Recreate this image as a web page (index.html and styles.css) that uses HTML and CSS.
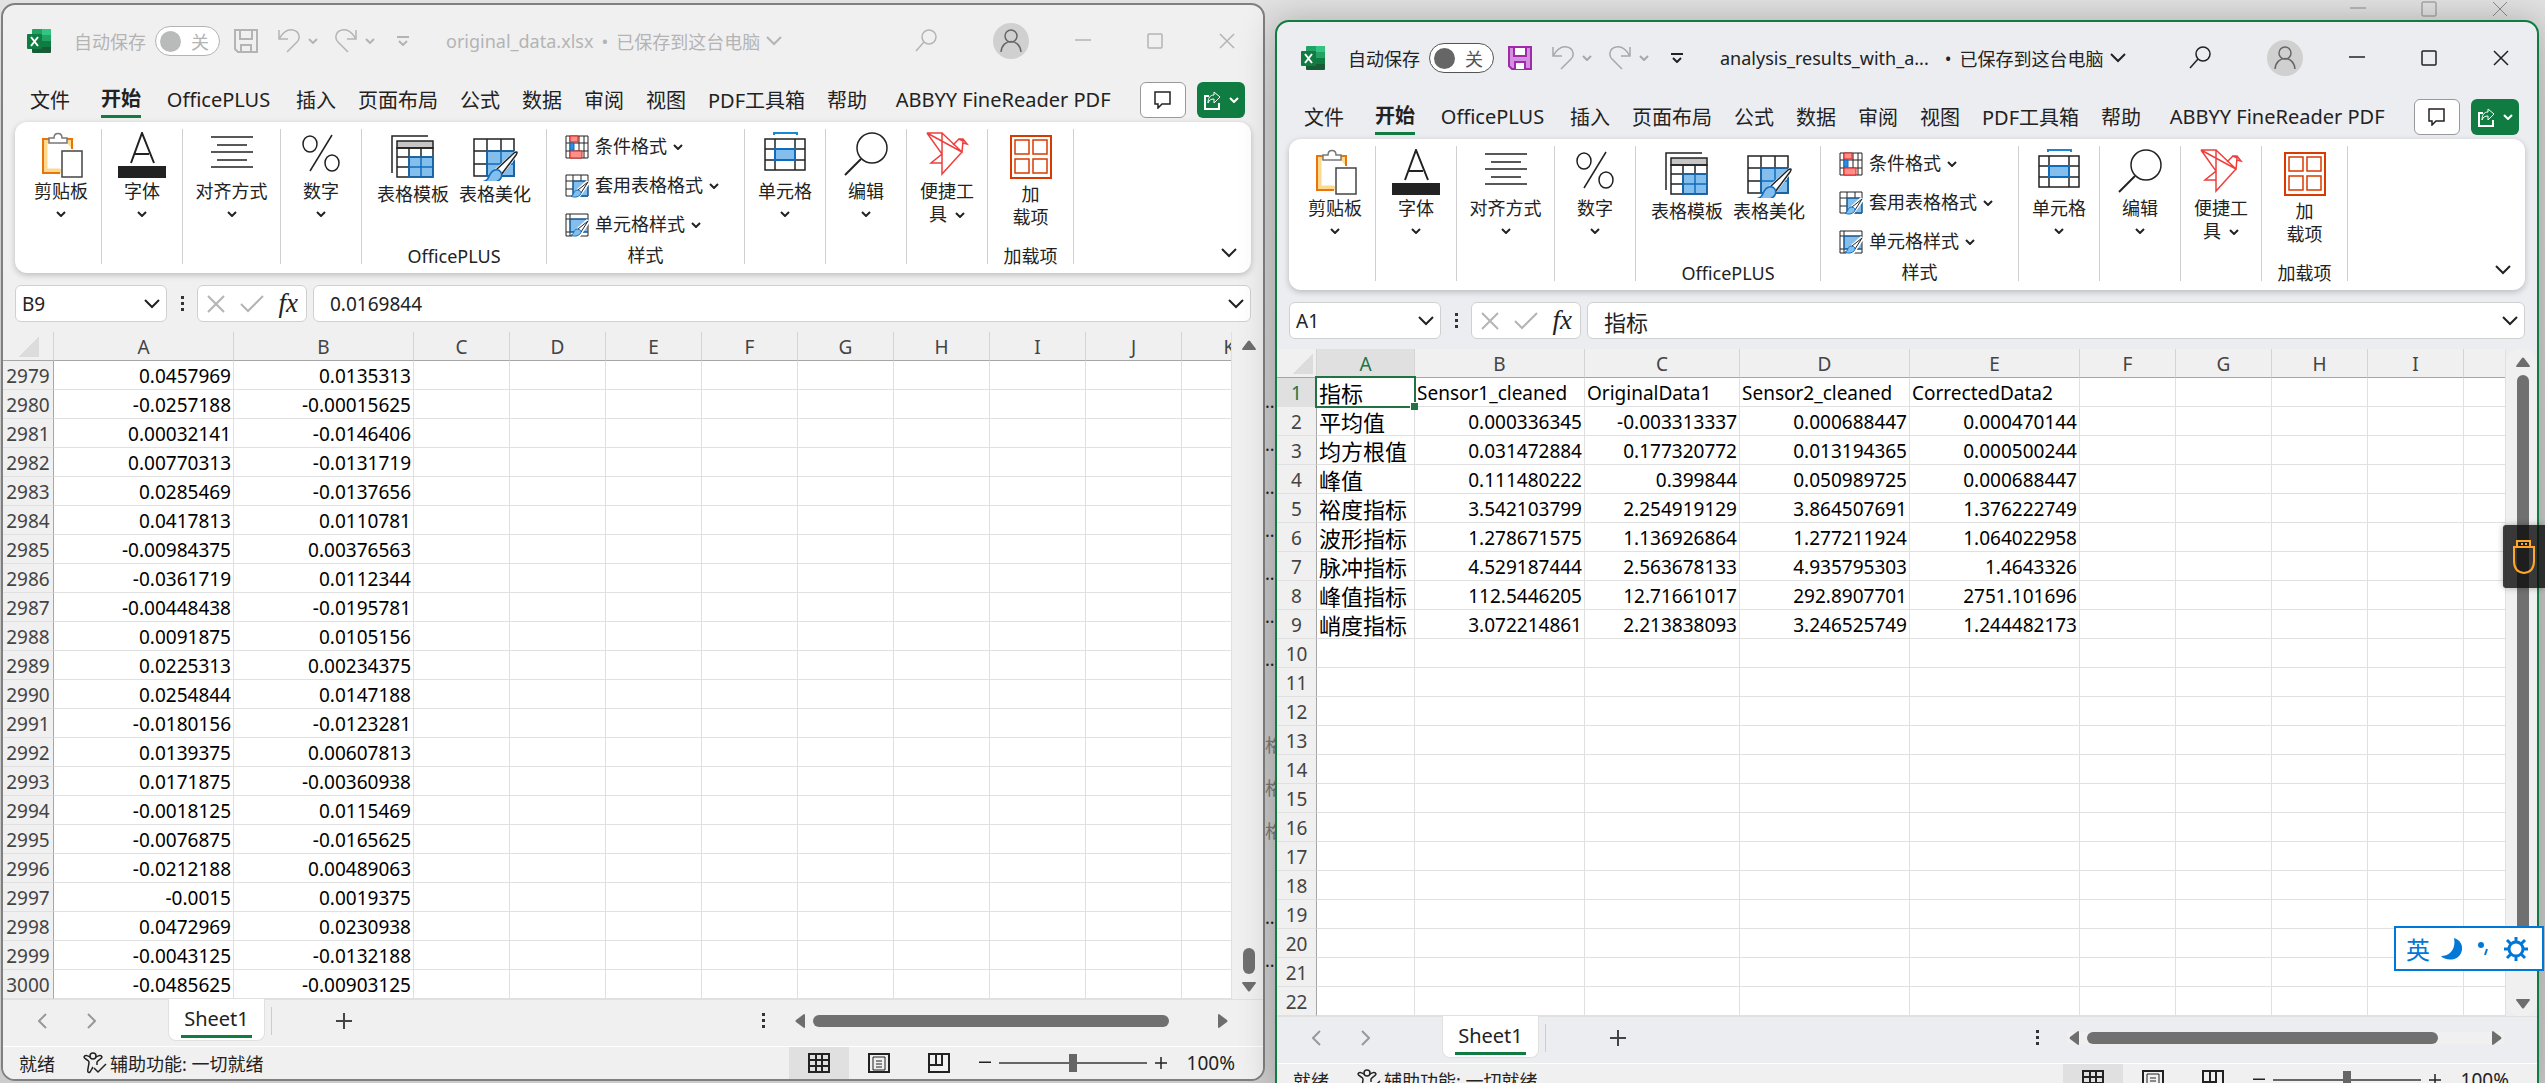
FILE: index.html
```html
<!DOCTYPE html>
<html lang="zh-CN">

<head>
    <meta charset="utf-8">
    <meta name="viewport" content="width=device-width, initial-scale=1.0">
    <title>Excel</title>
    <link rel="stylesheet" href="styles.css">
</head>

<body>

    <!-- icons -->
    <svg class="sprite" aria-hidden="true">
        <symbol id="i-excel" viewBox="0 0 24 24">
            <path d="M6 0h17q1 0 1 1v6H5V1q0-1 1-1z" fill="#21a366" />
            <path d="M15 0h8q1 0 1 1v6h-9z" fill="#33c481" />
            <path d="M5 6h10v6H5z" fill="#107c41" />
            <path d="M15 6h9v6h-9z" fill="#21a366" />
            <path d="M5 12h10v6H5z" fill="#185c37" />
            <path d="M15 12h9v6h-9z" fill="#107c41" />
            <path d="M5 18h19v5q0 1-1 1H6q-1 0-1-1z" fill="#185c37" />
            <rect y="5" width="15" height="15" rx="1" fill="#107c41" />
            <path d="M4 8l7 9M11 8l-7 9" stroke="#fff" stroke-width="2" fill="none" />
        </symbol>
        <symbol id="i-save" viewBox="0 0 24 24">
            <path class="disk" d="M1 1h22v22H4l-3-3z" stroke-width="2" />
            <path class="disk_part" d="M6 1h12v9H6zM7 23v-7h10v7" stroke-width="2" />
        </symbol>
        <symbol id="i-undo" viewBox="0 0 22 24">
            <path d="M1 1v9h9M1 10C5 3 10 0 15 1c6 1 8 8 4 12L9 23" />
        </symbol>
        <symbol id="i-redo" viewBox="0 0 22 24">
            <path d="M21 1v9h-9M21 10C17 3 12 0 7 1 1 2-1 9 3 13l10 10" />
        </symbol>
        <symbol id="i-chev" viewBox="0 0 10 6">
            <path d="M1 1l4 4 4-4" stroke-width="2" />
        </symbol>
        <symbol id="i-bigchev" viewBox="0 0 16 10">
            <path d="M1 1l7 7 7-7" stroke-width="2" />
        </symbol>
        <symbol id="i-custom" viewBox="0 0 12 10">
            <path d="M0 1h12M2 5l4 4 4-4" stroke-width="2" />
        </symbol>
        <symbol id="i-search" viewBox="0 0 22 24">
            <circle cx="14" cy="8" r="7" />
            <path d="M9 13L1 22" />
        </symbol>
        <symbol id="i-user" viewBox="0 0 22 24">
            <circle cx="11" cy="7" r="6" />
            <path d="M1 23c1-14 19-14 20 0" />
        </symbol>
        <symbol id="i-min" viewBox="0 0 16 16"><path d="M0 7h16" /></symbol>
        <symbol id="i-max" viewBox="0 0 16 16"><rect x="1" y="1" width="14" height="14" rx="1" /></symbol>
        <symbol id="i-close" viewBox="0 0 16 16"><path d="M1 1l14 14M15 1L1 15" /></symbol>
        <symbol id="i-comment" viewBox="0 0 18 18">
            <path d="M1 1h15v12H8l-4 4v-4H1z" />
        </symbol>
        <symbol id="i-share" viewBox="0 0 18 20">
            <path d="M5 6H1v13h14v-6" stroke-width="2" />
            <path d="M10 2l6 5-6 6v-4c-3 0-5 1-6 4 0-5 2-8 6-8z" />
        </symbol>

        <symbol id="i-paste" viewBox="-1 0 44 46">
            <path d="M9 7h-6v34h18v-4H7V11h3M31 16V7h-7" fill="#ffdc8c" stroke="none" />
            <path d="M10 7H3v34h17" stroke="#e8740c" stroke-width="2" />
            <path d="M6 9v29h14" stroke="#ffd88f" stroke-width="3" />
            <path d="M26 7h6v10" stroke="#e8740c" stroke-width="2" />
            <path d="M9 11V6h5c0-6 8-6 8 0h5v5z" fill="#fff" stroke="#777" />
            <path d="M22 19h20v26H22z" fill="#fff" stroke="#444" />
        </symbol>
        <symbol id="i-font" viewBox="0 0 48 46">
            <path d="M13 31L24 1l12 30M17 22h14" stroke-width="2" />
            <path d="M0 34h48v12H0z" fill="#222" stroke="none" />
        </symbol>
        <symbol id="i-align" viewBox="0 0 42 46">
            <path d="M0 5h42M6 13h30M0 20h42M6 28h30M0 35h42" />
        </symbol>
        <symbol id="i-percent" viewBox="0 0 38 46">
            <ellipse cx="8" cy="12" rx="7" ry="8" />
            <ellipse cx="30" cy="31" rx="7" ry="8" />
            <path d="M30 3L8 39" />
        </symbol>
        <symbol id="i-tpl" viewBox="0 0 44 46">
            <path d="M1 38V1h36" />
            <path d="M6 6h36v7H6z" fill="#c8c6c4" />
            <path d="M18 22h24v20H18z" fill="#83beec" stroke="none" />
            <path d="M6 13h36v29H6zM6 22h36M6 32h12M18 13v29M30 13v9" />
            <path d="M18 22h24v20H18zM18 32h24M30 22v20" stroke="#0f6cbd" />
        </symbol>
        <symbol id="i-paint" viewBox="-1 -2 46 46">
            <path d="M14 14h28v26H14z" fill="#83beec" stroke="none" />
            <path d="M1 2h40v37H1zM1 14h40M1 27h13M14 2v37M28 2v12" />
            <path d="M14 14h27v25H14zM14 27h27M28 14v25" stroke="#0f6cbd" />
            <path d="M22 32L42 14l4 3-16 20-8 9H10z" fill="#fff" stroke="none" />
            <path d="M23 33L41 16c3-2 4-1 2 2L28 38z" fill="#fff" />
            <path d="M22 33c5-1 8 3 6 8-3 5-12 6-16 3 5-1 3-9 10-11z" fill="#83beec" stroke="#0f6cbd" />
        </symbol>
        <symbol id="i-cond" viewBox="0 0 24 24">
            <path d="M1 1h22v22H1zM1 8h22M1 16h22M5 1v22M14 1v22M19 1v22" />
            <path d="M5 1h8v6H5zM5 16h12v7H5z" fill="#ff8f8b" stroke="#e0201b" />
            <path d="M5 8h4v7H5z" fill="#2f8fdd" stroke="#0f6cbd" />
        </symbol>
        <symbol id="i-tblstyle" viewBox="0 0 24 24">
            <path d="M8 7h15v16H8z" fill="#83beec" stroke="none" />
            <path d="M1 1h22v21H1zM1 7h22M1 15h7M8 1v21M16 1v6" />
            <path d="M8 7h15v15H8z" stroke="#0f6cbd" />
            <path d="M12 15L22 6l3 3-10 14H7z" fill="#fff" stroke="none" />
            <path d="M13 16L23 8l-7 11z" fill="#fff" />
            <path d="M12 16c4 0 5 3 3 5s-6 3-9 1c3 0 2-5 6-6z" fill="#83beec" stroke="#0f6cbd" />
        </symbol>
        <symbol id="i-cellstyle" viewBox="0 0 24 24">
            <path d="M5 6h16v13H5z" fill="#83beec" stroke="none" />
            <path d="M1 1h22v22H1zM1 6h22M1 19h22M5 1v22" />
            <path d="M5 6h17v13H5z" stroke="#0f6cbd" />
            <path d="M12 15L22 6l3 3-10 15H7z" fill="#fff" stroke="none" />
            <path d="M13 16L23 8l-7 11z" fill="#fff" />
            <path d="M12 16c4 0 5 3 3 5s-6 3-9 1c3 0 2-5 6-6z" fill="#83beec" stroke="#0f6cbd" />
        </symbol>
        <symbol id="i-cells" viewBox="0 0 42 46">
            <path d="M10-1v4M33-1v4M10 1h23" stroke="#1a86d6" stroke-width="2" />
            <path d="M1 7h40v31H1zM1 17h40M1 28h40M11 7v31M31 7v31" />
            <path d="M11 17h20v11H11z" fill="#83beec" stroke="#0f6cbd" stroke-width="2" />
        </symbol>
        <symbol id="i-find" viewBox="0 0 44 46">
            <circle cx="28" cy="16" r="15" />
            <path d="M17 27L1 43" stroke-width="2" />
        </symbol>
        <symbol id="i-bird" viewBox="0 0 42 46">
            <path d="M1 1h15v41l20-22zM1 1l15 21L5 31h11M16 1l20 19 1-11-4-2-6 6M33 7l4 0 4 5-4-1" stroke="#ee3f3c" />
        </symbol>
        <symbol id="i-addin" viewBox="0 0 42 46">
            <path d="M1 1h40v42H1z" stroke="#d83b01" stroke-width="2" />
            <path d="M5 5h14v14H5zM23 5h14v14H23zM5 24h14v14H5zM23 24h14v14H23z" stroke="#d83b01" />
        </symbol>

        <symbol id="i-cancel" viewBox="0 0 18 18"><path d="M1 1l16 16M17 1L1 17" stroke-width="2" /></symbol>
        <symbol id="i-ok" viewBox="0 0 24 18"><path d="M1 9l7 7L23 1" stroke-width="2" /></symbol>
        <symbol id="i-dots" viewBox="0 0 4 16">
            <path d="M0 0h3v3H0zM0 6h3v3H0zM0 12h3v3H0z" fill="#333" stroke="none" />
        </symbol>
        <symbol id="i-left" viewBox="0 0 9 16"><path d="M8 1L1 8l7 7" stroke-width="2" /></symbol>
        <symbol id="i-right" viewBox="0 0 9 16"><path d="M1 1l7 7-7 7" stroke-width="2" /></symbol>
        <symbol id="i-plus" viewBox="0 0 16 16"><path d="M0 8h16M8 0v16" stroke-width="2" /></symbol>
        <symbol id="i-tri" viewBox="0 0 14 10">
            <path d="M6 1q1-1 2 0l6 8q0 1-1 1H1q-1 0-1-1z" fill="#6e6e6e" stroke="none" />
        </symbol>
        <symbol id="i-access" viewBox="0 0 24 22">
            <circle cx="10" cy="4" r="3" />
            <path d="M7 5C5 4 2 2 1 5c0 2 5 3 5 5 0 4-2 8-1 10 2 2 3-2 5-5M13 5c2-1 5-3 6 0 0 2-4 3-5 5v3M11 16l4 4 8-8" />
        </symbol>
        <symbol id="i-v1" viewBox="0 0 22 20">
            <path d="M1 1h20v18H1zM1 7h20M1 13h20M8 1v18M14 1v18" stroke-width="2" />
        </symbol>
        <symbol id="i-v2" viewBox="0 0 22 20">
            <path d="M1 1h20v18H1z" stroke-width="2" />
            <path d="M5 4h12v13H5zM8 8h6M8 11h6M8 14h6" />
        </symbol>
        <symbol id="i-v3" viewBox="0 0 22 20">
            <path d="M1 1h20v18H1zM1 12h13V1M8 1v11" stroke-width="2" />
        </symbol>
    </svg>

    <template>
        <header class="titlebar">
            <svg class="logo"><use href="#i-excel" /></svg>
            <label class="autosave">自动保存 <input type="checkbox"><span class="toggle">关</span></label>
            <button class="save" aria-label="保存"><svg><use href="#i-save" /></svg></button>
            <button class="undo dim" aria-label="撤消"><svg class="arrow"><use href="#i-undo" /></svg><svg class="chev"><use href="#i-chev" /></svg></button>
            <button class="redo dim" aria-label="恢复"><svg class="arrow"><use href="#i-redo" /></svg><svg class="chev"><use href="#i-chev" /></svg></button>
            <button class="custom" aria-label="自定义"><svg><use href="#i-custom" /></svg></button>
            <button class="filename"><span class="temp_navn"></span><span class="bullet">•</span>已保存到这台电脑<svg class="bigchev"><use href="#i-bigchev" /></svg></button>
            <button class="search" aria-label="搜索"><svg><use href="#i-search" /></svg></button>
            <button class="avatar" aria-label="帐户"><svg><use href="#i-user" /></svg></button>
            <button class="caption" aria-label="最小化"><svg><use href="#i-min" /></svg></button>
            <button class="caption" aria-label="最大化"><svg><use href="#i-max" /></svg></button>
            <button class="caption" aria-label="关闭"><svg><use href="#i-close" /></svg></button>
        </header>

        <nav class="tabs">
            <button class="tab tab_fil">文件</button>
            <button class="tab valgt"><span>开始</span></button>
            <button class="tab tab_plus">OfficePLUS</button>
            <button class="tab">插入</button>
            <button class="tab">页面布局</button>
            <button class="tab">公式</button>
            <button class="tab">数据</button>
            <button class="tab">审阅</button>
            <button class="tab">视图</button>
            <button class="tab">PDF工具箱</button>
            <button class="tab">帮助</button>
            <button class="tab tab_abbyy">ABBYY FineReader PDF</button>
            <button class="comment" aria-label="批注"><svg><use href="#i-comment" /></svg></button>
            <button class="share" aria-label="共享"><svg class="share_pic"><use href="#i-share" /></svg><svg class="chev"><use href="#i-chev" /></svg></button>
        </nav>

        <section class="ribbon">
            <div class="group g_clip">
                <button class="big"><svg><use href="#i-paste" /></svg>剪贴板<svg class="chev"><use href="#i-chev" /></svg></button>
            </div>
            <div class="group g_small">
                <button class="big"><svg><use href="#i-font" /></svg>字体<svg class="chev"><use href="#i-chev" /></svg></button>
            </div>
            <div class="group g_align">
                <button class="big"><svg><use href="#i-align" /></svg>对齐方式<svg class="chev"><use href="#i-chev" /></svg></button>
            </div>
            <div class="group g_small">
                <button class="big"><svg><use href="#i-percent" /></svg>数字<svg class="chev"><use href="#i-chev" /></svg></button>
            </div>
            <div class="group g_plus">
                <div class="pair">
                    <button class="big low"><svg><use href="#i-tpl" /></svg>表格模板</button>
                    <button class="big low"><svg><use href="#i-paint" /></svg>表格美化</button>
                </div>
                <p class="group_navn">OfficePLUS</p>
            </div>
            <div class="group g_style">
                <button class="line"><svg><use href="#i-cond" /></svg>条件格式<svg class="chev"><use href="#i-chev" /></svg></button>
                <button class="line"><svg><use href="#i-tblstyle" /></svg>套用表格格式<svg class="chev"><use href="#i-chev" /></svg></button>
                <button class="line"><svg><use href="#i-cellstyle" /></svg>单元格样式<svg class="chev"><use href="#i-chev" /></svg></button>
                <p class="group_navn">样式</p>
            </div>
            <div class="group g_small">
                <button class="big"><svg><use href="#i-cells" /></svg>单元格<svg class="chev"><use href="#i-chev" /></svg></button>
            </div>
            <div class="group g_small">
                <button class="big"><svg><use href="#i-find" /></svg>编辑<svg class="chev"><use href="#i-chev" /></svg></button>
            </div>
            <div class="group g_small">
                <button class="big"><svg><use href="#i-bird" /></svg>便捷工<span>具 <svg class="chev inline"><use href="#i-chev" /></svg></span></button>
            </div>
            <div class="group g_addin">
                <button class="big low"><svg><use href="#i-addin" /></svg>加<span>载项</span></button>
                <p class="group_navn">加载项</p>
            </div>
            <button class="collapse" aria-label="折叠功能区"><svg class="bigchev"><use href="#i-bigchev" /></svg></button>
        </section>

        <section class="formula">
            <div class="field namebox"><input class="temp_celle" aria-label="名称框"><svg class="bigchev"><use href="#i-bigchev" /></svg></div>
            <svg class="dots"><use href="#i-dots" /></svg>
            <div class="field fx">
                <svg class="cancel"><use href="#i-cancel" /></svg>
                <svg class="ok"><use href="#i-ok" /></svg>
                <i>fx</i>
            </div>
            <div class="field bar"><input class="temp_formel" aria-label="编辑栏"><svg class="bigchev"><use href="#i-bigchev" /></svg></div>
        </section>

        <section class="sheet">
            <div class="cells">
                <table>
                    <colgroup></colgroup>
                    <thead></thead>
                    <tbody></tbody>
                </table>
            </div>
            <div class="vscroll">
                <svg><use href="#i-tri" /></svg>
                <div class="thumb"></div>
                <svg class="down"><use href="#i-tri" /></svg>
            </div>
        </section>

        <section class="sheetbar">
            <button class="prev" aria-label="上一个"><svg><use href="#i-left" /></svg></button>
            <button class="next" aria-label="下一个"><svg><use href="#i-right" /></svg></button>
            <button class="sheettab"><span>Sheet1</span></button>
            <button class="add" aria-label="新工作表"><svg><use href="#i-plus" /></svg></button>
            <svg class="dots"><use href="#i-dots" /></svg>
            <div class="hscroll">
                <svg class="west"><use href="#i-tri" /></svg>
                <div class="thumb"></div>
                <svg class="east"><use href="#i-tri" /></svg>
            </div>
        </section>

        <footer class="status">
            <span>就绪</span>
            <button class="access"><svg><use href="#i-access" /></svg>辅助功能: 一切就绪</button>
            <button class="view on" aria-label="普通"><svg><use href="#i-v1" /></svg></button>
            <button class="view" aria-label="页面布局视图"><svg><use href="#i-v2" /></svg></button>
            <button class="view" aria-label="分页预览"><svg><use href="#i-v3" /></svg></button>
            <button class="zoom" aria-label="缩小"><svg><use href="#i-min" /></svg></button>
            <input type="range" min="0" max="100" value="50" aria-label="缩放">
            <button class="zoom" aria-label="放大"><svg><use href="#i-plus" /></svg></button>
            <span class="pct">100%</span>
        </footer>
    </template>

    <!-- the windows lying behind -->
    <div class="behind">
        <div class="behind_caption">
            <svg><use href="#i-min" /></svg>
            <svg><use href="#i-max" /></svg>
            <svg><use href="#i-close" /></svg>
        </div>
        <div class="behind_list">
            <p>..</p><p>..</p><p>..</p><p>..</p><p>..</p><p>..</p><p>..</p>
            <p></p><p class="ge">格</p><p class="ge">格</p><p class="ge">格</p>
            <p></p><p>..</p><p>..</p>
        </div>
    </div>

    <main class="desktop">
        <article class="window inactive" id="original"></article>
        <article class="window active" id="results"></article>
    </main>

    <button class="usb" aria-label="USB">
        <svg viewBox="0 0 22 34">
            <path d="M4 1h13v6H4zM1 7h20v14q0 11-10 12Q1 32 1 21z" stroke-width="2" />
            <path d="M8 4h2M12 4h2" stroke-width="2" />
        </svg>
    </button>

    <div class="ime">
        <span>英</span>
        <svg viewBox="0 0 22 24"><path d="M14 1c10 3 10 14 4 19-5 4-14 3-17-1 10 0 15-8 13-18z" fill="#0078d7" stroke="none" /></svg>
        <svg class="punct" viewBox="0 0 12 16"><circle cx="4" cy="4" r="3" fill="#0078d7" stroke="none" /><path d="M10 8l-2 6" stroke-width="2" /></svg>
        <svg class="gear" viewBox="0 0 24 24">
            <circle cx="12" cy="12" r="7" stroke-width="3" />
            <path d="M12 0v5M12 19v5M0 12h5M19 12h5M3 3l4 4M17 17l4 4M21 3l-4 4M7 17l-4 4" stroke-width="3" />
        </svg>
    </div>

    <script src="script.js"></script>
</body>

</html>
```
FILE: styles.css
```css
* {
    box-sizing: border-box;
}

body {
    margin: 0;
    height: 100vh;
    overflow: hidden;
    background: linear-gradient(#e2e2e2, #d2d2d2 10%, #c4c4c4 60%, #cccccc);
    font-family: "Noto Sans", "Noto Sans CJK SC", sans-serif;
    font-size: 18px;
    color: #222;
}

p {
    margin: 0;
}

button {
    background: none;
    border: none;
    padding: 0;
    font: inherit;
    color: inherit;
    display: flex;
    align-items: center;
    justify-content: center;
    white-space: nowrap;
}

input {
    font: inherit;
    color: inherit;
    border: none;
    background: none;
    padding: 0;
    min-width: 0;
    outline: none;
}

svg {
    fill: none;
    stroke: currentColor;
    flex: none;
    display: block;
}

.sprite {
    position: absolute;
    width: 0;
    height: 0;
}

.disk {
    fill: var(--disk, none);
}

.disk_part {
    fill: var(--disk_part, none);
}

.chev {
    width: 10px;
    height: 6px;
}

.bigchev {
    width: 16px;
    height: 10px;
}

/* desktop */

.desktop {
    position: relative;
    display: grid;
    grid-template-columns: 1fr 1fr;
    grid-gap: 10px;
    align-items: start;
    padding: 3px 6px 0 1px;
}

.window {
    border: 2px solid #808080;
    border-radius: 14px;
    background: #f0f0f0;
    overflow: hidden;
    min-width: 0;
}

.active {
    --disk: #d58fe0;
    --disk_part: #fff;
    margin-top: 17px;
    border-color: #107c41;
    background: #ecedf1;
    box-shadow: 0 0 36px rgba(0, 0, 0, .22);
    z-index: 1;
}

.behind {
    position: absolute;
    top: 0;
    left: 0;
    right: 0;
    bottom: 0;
    overflow: hidden;
}

.behind_caption {
    position: absolute;
    top: 1px;
    right: 37px;
    display: flex;
    gap: 55px;
    color: #8a8a8a;
}

.behind_caption svg {
    width: 16px;
    height: 16px;
}

.behind_list {
    position: absolute;
    top: 381px;
    left: 1265px;
}

.behind_list p {
    height: 43px;
    line-height: 40px;
}

.behind_list .ge {
    color: #777;
}

/* title bar */

.titlebar {
    display: flex;
    align-items: center;
    height: 72px;
    padding-left: 24px;
}

.inactive .titlebar {
    color: #b4b4b4;
}

.logo {
    width: 24px;
    height: 24px;
    stroke: none;
    margin-right: 23px;
}

.autosave {
    display: flex;
    align-items: center;
    gap: 9px;
}

.autosave input {
    position: absolute;
    opacity: 0;
}

.toggle {
    display: flex;
    align-items: center;
    gap: 10px;
    width: 65px;
    height: 30px;
    padding-left: 4px;
    border: 1px solid currentColor;
    border-radius: 15px;
    background: #fff;
}

.toggle::before {
    content: "";
    width: 21px;
    height: 21px;
    border-radius: 50%;
    background: #b9bbbb;
}

.active .toggle {
    color: #555;
}

.active .toggle::before {
    background: #666;
}

.save {
    margin: 0 20px 0 14px;
}

.save svg {
    width: 24px;
    height: 24px;
}

.active .save {
    color: #a02ba8;
}

.arrow {
    width: 22px;
    height: 24px;
    margin-right: 8px;
    stroke-width: 1.5;
}

.active .dim {
    color: #a6a8ab;
}

.undo {
    margin-right: 17px;
}

.custom {
    margin: 0 37px 0 22px;
}

.custom svg {
    width: 12px;
    height: 10px;
}

.filename .bigchev {
    margin-left: 6px;
}

.bullet {
    margin: 0 8px;
}

.active .bullet {
    margin-left: 16px;
}

.search {
    margin: 0 56px 0 auto;
}

.search svg,
.avatar svg {
    width: 22px;
    height: 24px;
    stroke-width: 1.5;
}

.avatar {
    width: 36px;
    height: 36px;
    margin-right: 18px;
    border-radius: 50%;
    background: #d0d0d0;
    color: #666;
}

.caption {
    width: 72px;
    height: 40px;
}

.caption svg {
    width: 16px;
    height: 16px;
    stroke-width: 1.5;
}

/* tabs */

.tabs {
    display: flex;
    align-items: center;
    height: 45px;
    padding: 0 18px 0 16px;
    font-size: 20px;
}

.tab {
    padding: 0 11px;
    height: 36px;
}

.tab_fil {
    padding-right: 20px;
}

.tab_plus {
    width: 133px;
}

.tab_abbyy {
    width: 250px;
}

.valgt {
    font-weight: bold;
}

.valgt span {
    height: 36px;
    line-height: 34px;
    border-bottom: 3px solid #107c41;
}

.comment {
    width: 46px;
    height: 36px;
    margin-left: auto;
    border: 1px solid #999;
    border-radius: 6px;
    background: #fff;
}

.comment svg {
    width: 18px;
    height: 18px;
    stroke-width: 1.5;
}

.share {
    width: 48px;
    height: 36px;
    margin-left: 11px;
    gap: 7px;
    border-radius: 6px;
    background: #107c41;
    color: #fff;
}

.share_pic {
    width: 18px;
    height: 20px;
}

/* ribbon */

.ribbon {
    display: flex;
    height: 151px;
    margin: 0 12px;
    border-radius: 12px;
    background: #fff;
    box-shadow: 0 2px 6px rgba(0, 0, 0, .22);
    line-height: 23px;
}

.group {
    position: relative;
    display: flex;
    flex-direction: column;
    align-items: center;
    margin-right: 1px;
}

.group::after {
    content: "";
    position: absolute;
    top: 7px;
    right: -1px;
    bottom: 9px;
    width: 1px;
    background: #d0d0d0;
}

.g_small {
    width: 80px;
}

.g_clip {
    width: 86px;
    padding-left: 6px;
}

.g_align {
    width: 97px;
}

.g_plus {
    width: 184px;
}

.g_style {
    width: 197px;
}

.g_addin {
    width: 85px;
}

.big {
    flex-direction: column;
    padding-top: 10px;
}

.low {
    padding-top: 13px;
}

.big > svg:first-child {
    width: 48px;
    height: 46px;
    margin-bottom: 2px;
    stroke-width: 1.5;
    overflow: visible;
}

.big > .chev {
    margin-top: 8px;
}

.big span {
    display: flex;
    align-items: center;
    gap: 8px;
}

.pair {
    display: flex;
    gap: 10px;
}

.line {
    align-self: flex-start;
    height: 39px;
    margin-left: 18px;
}

.line:first-child {
    margin-top: 5px;
}

.line > svg:first-child {
    width: 24px;
    height: 24px;
    margin-right: 6px;
}

.line .chev {
    margin-left: 6px;
}

.group_navn {
    margin-top: auto;
    padding-bottom: 5px;
}

.g_style .group_navn {
    margin-top: 0;
}

.collapse {
    align-self: flex-end;
    margin: 0 14px 15px auto;
}

/* formula bar */

.formula {
    display: flex;
    align-items: center;
    margin: 12px 12px 10px;
    height: 37px;
    font-size: 19px;
}

.field {
    display: flex;
    align-items: center;
    height: 37px;
    border: 1px solid #d0d0d0;
    border-radius: 6px;
    background: #fff;
}

.field input {
    flex: 1;
}

.field .bigchev {
    margin: 0 6px;
}

.namebox {
    width: 152px;
    padding-left: 6px;
}

.dots {
    width: 4px;
    height: 16px;
}

.formula .dots {
    margin: 0 12px 0 14px;
}

.fx {
    width: 110px;
    padding: 0 8px 0 9px;
    justify-content: space-between;
    color: #b4b4b4;
}

.fx i {
    font: italic 27px "Liberation Serif", serif;
    color: #222;
}

.cancel {
    width: 18px;
    height: 18px;
}

.ok {
    width: 24px;
    height: 18px;
}

.bar {
    flex: 1;
    margin-left: 6px;
    padding-left: 16px;
}

.active .bar input {
    font-size: 22px;
}

/* sheet */

.sheet {
    display: flex;
}

.cells {
    flex: 1;
    min-width: 0;
    overflow: hidden;
    background: #fff;
    border-right: 1px solid #e0e0e0;
}

table {
    table-layout: fixed;
    width: 0;
    border-collapse: separate;
    border-spacing: 0;
    font-size: 19px;
    line-height: 26px;
}

th,
td {
    height: 29px;
    padding: 2px 2px 0;
    white-space: nowrap;
    border-right: 1px solid #e0e0e0;
    border-bottom: 1px solid #e0e0e0;
}

th {
    padding: 2px 0 0;
    background: #f0f0f0;
    color: #444;
    font-weight: normal;
}

thead th {
    border-right-color: #d4d4d4;
    border-bottom-color: #a6a6a6;
}

tbody th {
    border-right-color: #a6a6a6;
}

td {
    text-align: right;
    color: #000;
}

td.tekst {
    text-align: left;
}

td.cjk {
    font-size: 22px;
}

th.on {
    background: #e0e0e0;
    color: #217346;
}

.corner::before {
    content: "";
    display: block;
    width: 20px;
    height: 20px;
    margin: 0 14px 0 auto;
    background: linear-gradient(135deg, transparent 50%, #dcdcdc 50%);
}

.active .corner::before {
    margin-right: 3px;
}

td.cursor {
    position: relative;
}

.cursor::before {
    content: "";
    position: absolute;
    top: -2px;
    left: -2px;
    right: -2px;
    bottom: -2px;
    border: 2px solid #217346;
}

.cursor::after {
    content: "";
    position: absolute;
    right: -4px;
    bottom: -4px;
    width: 7px;
    height: 7px;
    border: solid #fff;
    border-width: 1px 0 0 1px;
    background: #217346;
}

.vscroll {
    display: flex;
    flex-direction: column;
    align-items: center;
    width: 31px;
    padding: 8px 0 7px 2px;
}

.active .vscroll {
    background: #f0f0f0;
    border-radius: 14px;
}

.vscroll svg {
    width: 14px;
    height: 10px;
}

.thumb {
    border-radius: 6px;
    background: #707070;
}

.vscroll .thumb {
    width: 12px;
    height: 26px;
    margin-top: auto;
}

.active .vscroll .thumb {
    height: 590px;
    margin-top: 8px;
}

.down {
    margin-top: 8px;
    transform: rotate(180deg);
}

.active .down {
    margin-top: auto;
}

/* sheet tabs */

.sheetbar {
    display: flex;
    align-items: center;
    height: 47px;
    padding: 0 33px 4px 35px;
    border-top: 1px solid #e0e0e0;
    color: #999;
}

.prev svg,
.next svg {
    width: 9px;
    height: 16px;
}

.next {
    margin: 0 72px 0 40px;
}

.sheettab {
    align-self: flex-start;
    width: 97px;
    height: 42px;
    margin-top: -1px;
    border: 1px solid #e0e0e0;
    border-top: none;
    border-radius: 0 0 8px 8px;
    background: #fff;
    color: #222;
    font-size: 20px;
}

.sheettab span {
    height: 36px;
    padding: 0 3px;
    line-height: 34px;
    border-bottom: 3px solid #107c41;
}

.add {
    height: 28px;
    margin-left: 6px;
    padding-left: 64px;
    border-left: 1px solid #ccc;
    color: #444;
}

.add svg {
    width: 16px;
    height: 16px;
}

.sheetbar .dots {
    margin: 0 27px 0 auto;
}

.hscroll {
    display: flex;
    align-items: center;
    width: 437px;
}

.hscroll svg {
    width: 14px;
    height: 10px;
}

.hscroll .thumb {
    width: 356px;
    height: 12px;
    margin: 0 auto 0 6px;
}

.active .hscroll .thumb {
    width: 351px;
}

.west {
    transform: rotate(-90deg);
}

.east {
    transform: rotate(90deg);
}

.active .hscroll {
    background: #f0f0f0;
}

/* status bar */

.status {
    display: flex;
    align-items: center;
    height: 33px;
    padding: 0 28px 0 16px;
    border-top: 1px solid #fff;
    background: #f0f0f0;
}

.access {
    margin: 0 auto 0 28px;
    gap: 3px;
}

.access svg {
    width: 24px;
    height: 22px;
    stroke-width: 1.5;
}

.view {
    width: 60px;
    height: 32px;
}

.view svg {
    width: 22px;
    height: 20px;
}

.on.view {
    background: #e0e0e0;
}

.zoom {
    margin: 0 8px;
}

.zoom svg {
    width: 12px;
    height: 12px;
    stroke-width: 2;
}

.view + .zoom {
    margin-left: 10px;
}

.status input {
    -webkit-appearance: none;
    appearance: none;
    width: 148px;
    height: 18px;
    margin: 0;
    background: linear-gradient(#666, #666) center / 100% 2px no-repeat;
}

.status input::-webkit-slider-thumb {
    -webkit-appearance: none;
    width: 8px;
    height: 18px;
    background: #666;
}

.pct {
    margin-left: 12px;
    font-size: 19px;
}

/* floating things */

.usb {
    position: absolute;
    top: 525px;
    right: 0;
    width: 42px;
    height: 63px;
    z-index: 2;
    border-radius: 3px 0 0 3px;
    background: rgba(10, 10, 10, .8);
    box-shadow: 0 0 6px rgba(0, 0, 0, .3);
    color: #ffa726;
}

.usb svg {
    width: 22px;
    height: 34px;
}

.ime {
    position: absolute;
    right: 1px;
    bottom: 112px;
    z-index: 2;
    display: flex;
    align-items: center;
    gap: 10px;
    width: 150px;
    height: 45px;
    padding-left: 10px;
    border: 2px solid #0078d7;
    background: #fff;
    color: #0078d7;
    font-size: 24px;
}

.ime svg {
    width: 22px;
    height: 24px;
}

.ime .punct {
    width: 12px;
    height: 16px;
    margin: 0 5px;
}

.ime .gear {
    width: 24px;
}
```
FILE: script.js
```js
const temp = document.querySelector("template");

const original = [
    ["0.0457969", "0.0135313"],
    ["-0.0257188", "-0.00015625"],
    ["0.00032141", "-0.0146406"],
    ["0.00770313", "-0.0131719"],
    ["0.0285469", "-0.0137656"],
    ["0.0417813", "0.0110781"],
    ["-0.00984375", "0.00376563"],
    ["-0.0361719", "0.0112344"],
    ["-0.00448438", "-0.0195781"],
    ["0.0091875", "0.0105156"],
    ["0.0225313", "0.00234375"],
    ["0.0254844", "0.0147188"],
    ["-0.0180156", "-0.0123281"],
    ["0.0139375", "0.00607813"],
    ["0.0171875", "-0.00360938"],
    ["-0.0018125", "0.0115469"],
    ["-0.0076875", "-0.0165625"],
    ["-0.0212188", "0.00489063"],
    ["-0.0015", "0.0019375"],
    ["0.0472969", "0.0230938"],
    ["-0.0043125", "-0.0132188"],
    ["-0.0485625", "-0.00903125"]
];

const results = [
    ["指标", "Sensor1_cleaned", "OriginalData1", "Sensor2_cleaned", "CorrectedData2"],
    ["平均值", "0.000336345", "-0.003313337", "0.000688447", "0.000470144"],
    ["均方根值", "0.031472884", "0.177320772", "0.013194365", "0.000500244"],
    ["峰值", "0.111480222", "0.399844", "0.050989725", "0.000688447"],
    ["裕度指标", "3.542103799", "2.254919129", "3.864507691", "1.376222749"],
    ["波形指标", "1.278671575", "1.136926864", "1.277211924", "1.064022958"],
    ["脉冲指标", "4.529187444", "2.563678133", "4.935795303", "1.4643326"],
    ["峰值指标", "112.5446205", "12.71661017", "292.8907701", "2751.101696"],
    ["峭度指标", "3.072214861", "2.213838093", "3.246525749", "1.244482173"]
];

visVindue("#original", {
    navn: "original_data.xlsx",
    celle: "B9",
    formel: "0.0169844",
    start: 2979,
    bredder: [51, 180, 180, 96, 96, 96, 96, 96, 96, 96, 96, 96],
    data: original
});

visVindue("#results", {
    navn: "analysis_results_with_a...",
    celle: "A1",
    formel: "指标",
    start: 1,
    bredder: [40, 98, 170, 155, 170, 170, 96, 96, 96, 96, 96],
    data: results,
    cursor: true
});

function visVindue(dest, bog) {
    const klon = temp.content.cloneNode(true);
    klon.querySelector(".temp_navn").textContent = bog.navn;
    klon.querySelector(".temp_celle").value = bog.celle;
    klon.querySelector(".temp_formel").value = bog.formel;

    bog.bredder.forEach(bredde => {
        const col = document.createElement("col");
        col.style.width = bredde + "px";
        klon.querySelector("colgroup").appendChild(col);
    });

    // column letters
    const top = klon.querySelector("thead").insertRow();
    bog.bredder.forEach((bredde, i) => {
        const th = document.createElement("th");
        if (i == 0) {
            th.className = "corner";
        } else {
            th.textContent = String.fromCharCode(64 + i);
        }
        if (bog.cursor && i == 1) th.className = "on";
        top.appendChild(th);
    });

    // 22 rows are visible in each window
    for (let r = 0; r < 22; r++) {
        const row = klon.querySelector("tbody").insertRow();
        const th = document.createElement("th");
        th.textContent = bog.start + r;
        if (bog.cursor && r == 0) th.className = "on";
        row.appendChild(th);

        for (let c = 0; c < bog.bredder.length - 1; c++) {
            const td = row.insertCell();
            const tekst = bog.data[r] ? bog.data[r][c] || "" : "";
            td.textContent = tekst;
            if (tekst && isNaN(tekst)) td.classList.add("tekst");
            if (/[\u4e00-\u9fff]/.test(tekst)) td.classList.add("cjk");
            if (bog.cursor && r == 0 && c == 0) td.classList.add("cursor");
        }
    }

    document.querySelector(dest).appendChild(klon);
}
```
